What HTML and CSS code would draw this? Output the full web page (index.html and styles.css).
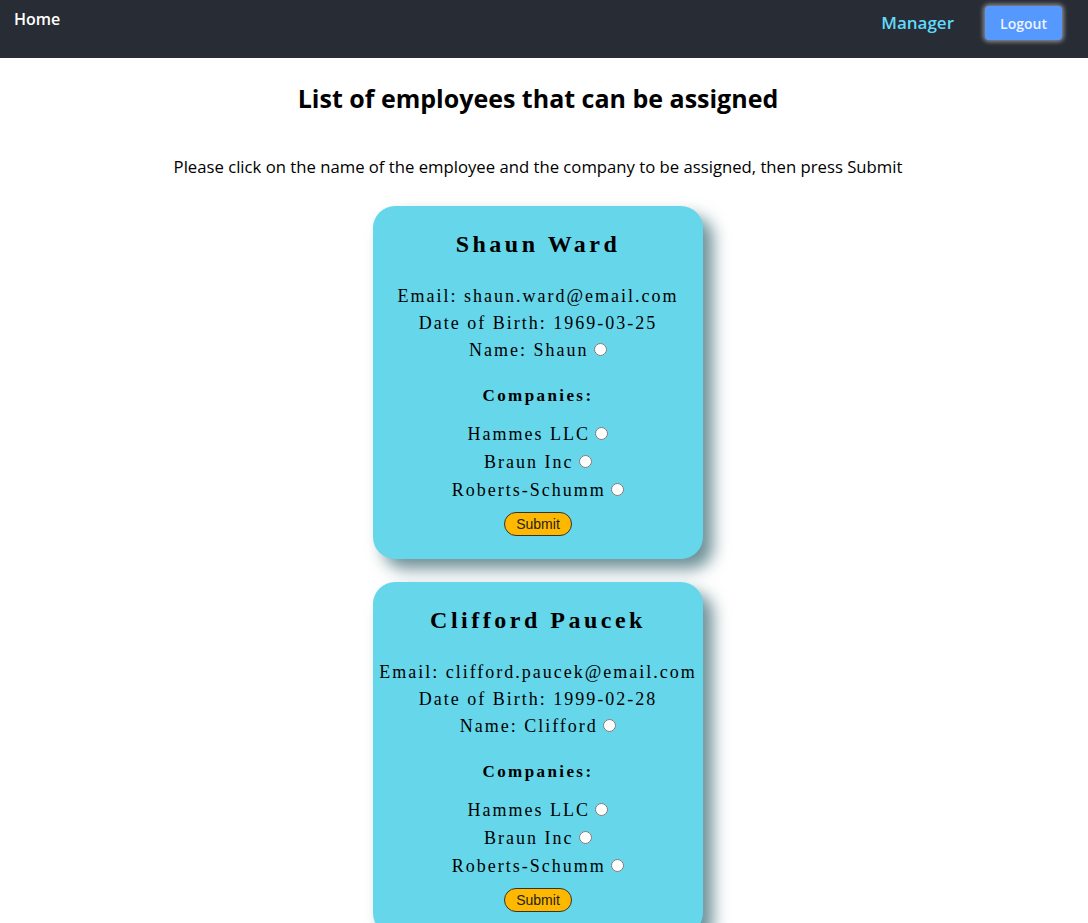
FILE: index.html
```html
<!DOCTYPE html>
<html>
<head>
<meta charset="utf-8">
<link rel="stylesheet" href="styles.css">
</head>
<body>
<nav class="navbar">
  <a class="nav-home">Home</a>
  <div class="nav-right">
    <a class="nav-link">Manager</a>
    <button class="logout">Logout</button>
  </div>
</nav>
<main class="main">
  <h1 class="title">List of employees that can be assigned</h1>
  <p class="intro">Please click on the name of the employee and the company to be assigned, then press Submit</p>
  <div class="cards">
    <form class="card">
      <h2 class="card-name">Shaun Ward</h2>
      <div class="info">
        <div>Email: shaun.ward@email.com</div>
        <div>Date of Birth: 1969-03-25</div>
        <div>Name: Shaun <input type="radio" name="emp"></div>
      </div>
      <h3 class="comp-title">Companies:</h3>
      <div class="companies">
        <div>Hammes LLC <input type="radio" name="c1"></div>
        <div>Braun Inc <input type="radio" name="c1"></div>
        <div>Roberts-Schumm <input type="radio" name="c1"></div>
      </div>
      <button type="button" class="submit">Submit</button>
    </form>
    <form class="card">
      <h2 class="card-name">Clifford Paucek</h2>
      <div class="info">
        <div>Email: clifford.paucek@email.com</div>
        <div>Date of Birth: 1999-02-28</div>
        <div>Name: Clifford <input type="radio" name="emp"></div>
      </div>
      <h3 class="comp-title">Companies:</h3>
      <div class="companies">
        <div>Hammes LLC <input type="radio" name="c2"></div>
        <div>Braun Inc <input type="radio" name="c2"></div>
        <div>Roberts-Schumm <input type="radio" name="c2"></div>
      </div>
      <button type="button" class="submit">Submit</button>
    </form>
  </div>
</main>
</body>
</html>
```
FILE: styles.css
```css
* { box-sizing: border-box; }
body {
  margin: 0;
  font-family: "Open Sans", "Noto Sans", sans-serif;
  background: #fff;
  color: #000;
}
.navbar {
  height: 58px;
  background: #282c34;
  display: flex;
  justify-content: space-between;
  align-items: flex-start;
  padding: 0 26px 0 14px;
}
.nav-home {
  color: #fff;
  font-weight: 600;
  font-size: 16px;
  margin-top: 8px;
}
.nav-right {
  display: flex;
  align-items: center;
  gap: 31px;
  margin-top: 6px;
}
.nav-link {
  color: #61dafb;
  font-weight: 600;
  font-size: 17px;
  margin-top: -2px;
}
.logout {
  width: 77px;
  height: 34px;
  border: none;
  border-radius: 4px;
  background: #5599ff;
  color: #eef4ff;
  font-family: "Open Sans", sans-serif;
  font-weight: 600;
  font-size: 14px;
  box-shadow: 0 0 4px 2px rgba(255,255,255,0.45);
}
.main {
  margin-right: 12px;
  text-align: center;
  padding-top: 24px;
}
.title {
  margin: 0;
  font-size: 25px;
  font-weight: 700;
  line-height: 32px;
}
.intro {
  margin: 42px 0 0;
  font-size: 16.7px;
  line-height: 22px;
}
.cards {
  display: flex;
  flex-direction: column;
  align-items: center;
  gap: 23px;
  margin-top: 28px;
}
.card {
  width: 330px;
  background: #66d6ea;
  border-radius: 22px;
  box-shadow: 10px 10px 16px rgba(30, 85, 95, 0.65);
  font-family: "Liberation Serif", "Times New Roman", serif;
  letter-spacing: 2px;
  padding: 23px 0 23px;
  display: flex;
  flex-direction: column;
  align-items: center;
}
.card-name {
  margin: 0;
  font-size: 24px;
  line-height: 30px;
  letter-spacing: 3.5px;
  font-weight: 700;
}
.info {
  margin-top: 24px;
  font-size: 18px;
  line-height: 27px;
}
.info input, .companies input {
  margin: 0 0 0 -1px;
  width: 13px;
  height: 13px;
  vertical-align: 0;
}
.comp-title {
  margin: 21px 0 0;
  font-size: 17px;
  line-height: 22px;
  letter-spacing: 2.4px;
  font-weight: 700;
}
.companies {
  margin-top: 13px;
  font-size: 18px;
  line-height: 28px;
}
.submit {
  margin-top: 8px;
  height: 24px;
  padding: 0 11px;
  border: 1px solid #333;
  border-radius: 12px;
  background: #ffb800;
  color: #222;
  font-family: "Liberation Sans", Arial, sans-serif;
  font-size: 14px;
  letter-spacing: 0;
}
```
